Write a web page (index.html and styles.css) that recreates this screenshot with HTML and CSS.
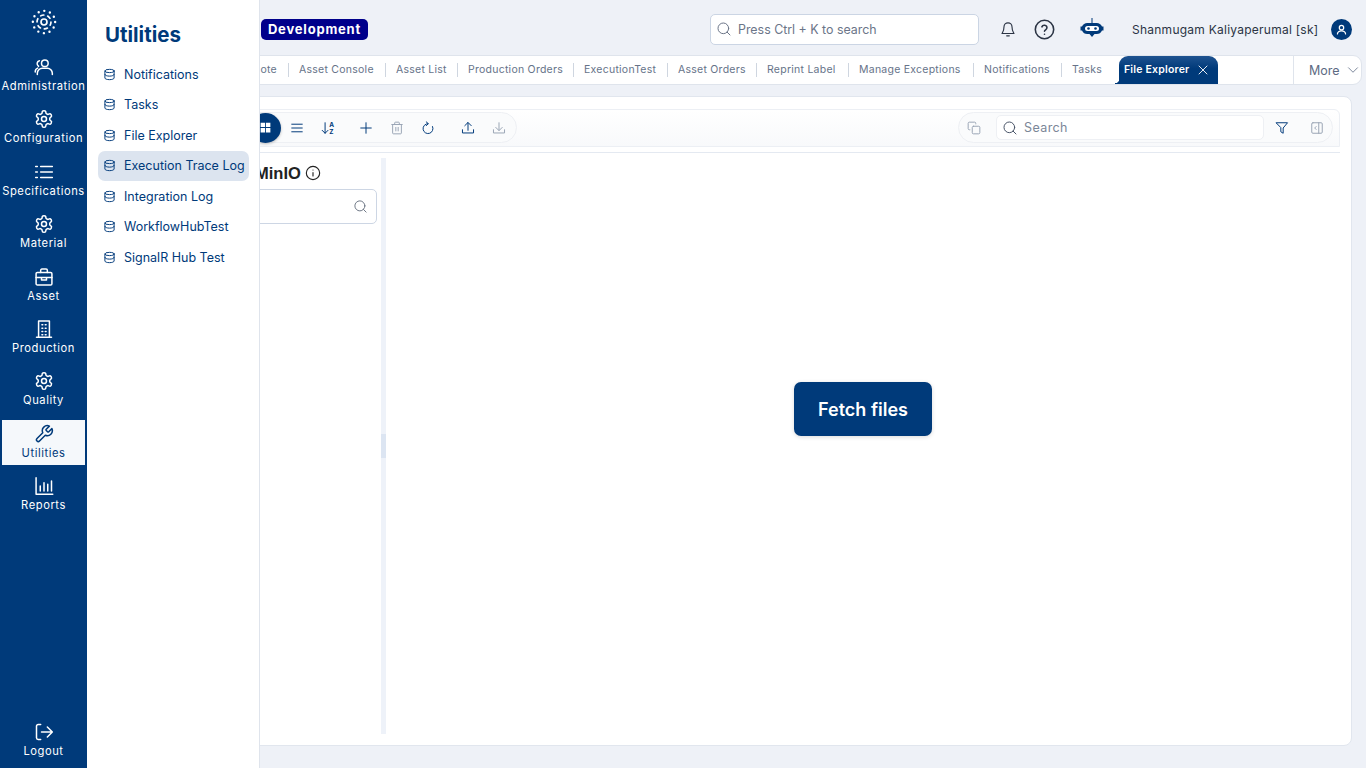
FILE: index.html
```html
<!DOCTYPE html>
<html>
<head>
  <meta charset="utf-8">
  <meta name="viewport" content="width=device-width">
  <title>File Explorer</title>
  <link rel="stylesheet" href="styles.css">
</head>
<body>
<svg class="sprite" xmlns="http://www.w3.org/2000/svg">
  <symbol id="i-users" viewBox="0 0 24 24"><circle cx="13" cy="7.5" r="4"/><path d="M4 21v-1.5a6 6 0 0 1 6-6h6a6 6 0 0 1 6 6V21"/><path d="M6.500 4.500a3.600 3.600 0 0 0-1 6.600"/><path d="M1.500 18v-.5a4.500 4.500 0 0 1 3-4.200"/></symbol>
  <symbol id="i-gear" viewBox="0 0 24 24"><path d="M12.22 2h-.44a2 2 0 0 0-2 2v.18a2 2 0 0 1-1 1.73l-.43.25a2 2 0 0 1-2 0l-.15-.08a2 2 0 0 0-2.73.73l-.22.38a2 2 0 0 0 .73 2.73l.15.1a2 2 0 0 1 1 1.72v.51a2 2 0 0 1-1 1.74l-.15.09a2 2 0 0 0-.73 2.73l.22.38a2 2 0 0 0 2.73.73l.15-.08a2 2 0 0 1 2 0l.43.25a2 2 0 0 1 1 1.73V20a2 2 0 0 0 2 2h.44a2 2 0 0 0 2-2v-.18a2 2 0 0 1 1-1.73l.43-.25a2 2 0 0 1 2 0l.15.08a2 2 0 0 0 2.73-.73l.22-.39a2 2 0 0 0-.73-2.73l-.15-.08a2 2 0 0 1-1-1.74v-.5a2 2 0 0 1 1-1.74l.15-.09a2 2 0 0 0 .73-2.73l-.22-.38a2 2 0 0 0-2.73-.73l-.15.08a2 2 0 0 1-2 0l-.43-.25a2 2 0 0 1-1-1.73V4a2 2 0 0 0-2-2z"/><circle cx="12" cy="12" r="3"/></symbol>
  <symbol id="i-list" viewBox="0 0 24 24"><path d="M8 5.500h14M8 12h14M8 18.500h14M2 5.500h2M2 12h2M2 18.500h2"/></symbol>
  <symbol id="i-case" viewBox="0 0 24 24"><rect x="2.500" y="6.500" width="19" height="15" rx="1.500"/><path d="M8 6.500V4a1.500 1.500 0 0 1 1.500-1.500h5A1.500 1.500 0 0 1 16 4v2.500"/><path d="M2.500 12.500h19M9 12.500v3h6v-3"/></symbol>
  <symbol id="i-building" viewBox="0 0 24 24"><path d="M5.500 22V2.500h13V22M3 22h18"/><path d="M9.500 7h1M13.500 7h1M9.500 11h1M13.500 11h1M9.500 15h1M13.500 15h1M9.500 19h1M13.500 19h1"/></symbol>
  <symbol id="i-wrench" viewBox="0 0 24 24"><path d="M14.700 6.300a1 1 0 0 0 0 1.400l1.600 1.600a1 1 0 0 0 1.400 0l3.770-3.770a6 6 0 0 1-7.940 7.940l-6.910 6.910a2.120 2.120 0 0 1-3-3l6.910-6.910a6 6 0 0 1 7.940-7.940l-3.760 3.760z"/></symbol>
  <symbol id="i-chart" viewBox="0 0 24 24"><path d="M2.500 2v20h20M7.500 18v-6M12 18V8M16.500 18v-8M21 18V6"/></symbol>
  <symbol id="i-logout" viewBox="0 0 24 24"><path d="M8 3H5a2 2 0 0 0-2 2v14a2 2 0 0 0 2 2h3"/><path d="M9 12h13M16 6l6 6-6 6"/></symbol>
  <symbol id="i-db" viewBox="0 0 24 24"><ellipse cx="12" cy="5.500" rx="8.500" ry="3"/><path d="M3.500 5.500v13c0 1.700 3.800 3 8.500 3s8.500-1.300 8.500-3v-13"/><path d="M3.500 12c0 1.700 3.800 3 8.500 3s8.500-1.300 8.500-3"/></symbol>
  <symbol id="i-search" viewBox="0 0 24 24"><circle cx="11" cy="11" r="8"/><path d="M21 21l-4.300-4.300"/></symbol>
  <symbol id="i-bell" viewBox="0 0 24 24"><path d="M6 8a6 6 0 0 1 12 0c0 7 2.500 8.500 3 10H3c.5-1.500 3-3 3-10z"/><path d="M10 21.500h4"/></symbol>
  <symbol id="i-help" viewBox="0 0 24 24"><circle cx="12" cy="12" r="10.500"/><path d="M9 9a3 3 0 0 1 5.800 1c0 2-2.800 2.500-2.800 4"/><path d="M12 17.500h.01"/></symbol>
  <symbol id="i-avatar" viewBox="0 0 24 24"><circle cx="12" cy="9" r="3.500"/><path d="M5.500 19a6.500 5 0 0 1 13 0"/></symbol>
  <symbol id="i-grid" viewBox="0 0 24 24"><path d="M3 3h8.200v8.200H3zM12.800 3H21v8.200h-8.200zM3 12.800h8.200V21H3zM12.800 12.800H21V21h-8.200z"/></symbol>
  <symbol id="i-menu" viewBox="0 0 24 24"><path d="M3 5.500h18M3 12h18M3 18.500h18"/></symbol>
  <symbol id="i-plus" viewBox="0 0 24 24"><path d="M12 3v18M3 12h18"/></symbol>
  <symbol id="i-trash" viewBox="0 0 24 24"><path d="M3 6h18M8 6V3.500A1.500 1.500 0 0 1 9.500 2h5A1.500 1.500 0 0 1 16 3.500V6"/><path d="M4.500 6v14.500A1.500 1.500 0 0 0 6 22h12a1.500 1.500 0 0 0 1.500-1.500V6"/><path d="M10 11v6M14 11v6"/></symbol>
  <symbol id="i-refresh" viewBox="0 0 24 24"><path d="M12 4.500a8.500 8.500 0 1 0 7.800 5"/><path d="M9 1.500l3.500 3L9 8"/></symbol>
  <symbol id="i-upload" viewBox="0 0 24 24"><path d="M12 16V3M6.500 8L12 2.500 17.500 8"/><path d="M2.500 15v5.500h19V15"/></symbol>
  <symbol id="i-download" viewBox="0 0 24 24"><path d="M12 3v13M6.500 11l5.500 5.500 5.500-5.500"/><path d="M2.500 15v5.500h19V15"/></symbol>
  <symbol id="i-copy" viewBox="0 0 24 24"><rect x="9" y="9" width="13" height="13" rx="2"/><path d="M5 15H4a2 2 0 0 1-2-2V4a2 2 0 0 1 2-2h9a2 2 0 0 1 2 2v1"/></symbol>
  <symbol id="i-filter" viewBox="0 0 24 24"><path d="M2.500 3h19l-7.500 9v9l-4-2.500V12z"/></symbol>
  <symbol id="i-panel" viewBox="0 0 24 24"><rect x="3" y="3" width="18" height="18" rx="2"/><path d="M15 3v18M10.500 9.500L8 12l2.500 2.500"/></symbol>
  <symbol id="i-info" viewBox="0 0 24 24"><circle cx="12" cy="12" r="10"/><path d="M12 16.500v-5M12 7.500h.01"/></symbol>
  <symbol id="i-x" viewBox="0 0 24 24"><path d="M4 4l16 16M20 4L4 20"/></symbol>
  <symbol id="i-down" viewBox="0 0 24 24"><path d="M3 7.500l9 9 9-9"/></symbol>
</svg>

<div class="app">
  <nav class="rail">
    <svg class="logo" viewBox="0 0 28 28">
      <circle class="logoDots" cx="14" cy="14" r="12"/>
      <circle class="logoDotsInner" cx="14" cy="14" r="7.500"/>
      <circle class="logoRing" cx="14" cy="14" r="3.200"/>
    </svg>
    <div class="railItems">
      <a class="railItem"><svg class="icon"><use href="#i-users"/></svg>Administration</a>
      <a class="railItem"><svg class="icon"><use href="#i-gear"/></svg>Configuration</a>
      <a class="railItem"><svg class="icon"><use href="#i-list"/></svg>Specifications</a>
      <a class="railItem"><svg class="icon"><use href="#i-gear"/></svg>Material</a>
      <a class="railItem"><svg class="icon"><use href="#i-case"/></svg>Asset</a>
      <a class="railItem"><svg class="icon"><use href="#i-building"/></svg>Production</a>
      <a class="railItem"><svg class="icon"><use href="#i-gear"/></svg>Quality</a>
      <a class="railItem active"><svg class="icon"><use href="#i-wrench"/></svg>Utilities</a>
      <a class="railItem"><svg class="icon"><use href="#i-chart"/></svg>Reports</a>
    </div>
    <a class="railItem"><svg class="icon"><use href="#i-logout"/></svg>Logout</a>
  </nav>

  <aside class="flyout">
    <h2>Utilities</h2>
    <ul>
      <li><svg class="icon"><use href="#i-db"/></svg>Notifications</li>
      <li><svg class="icon"><use href="#i-db"/></svg>Tasks</li>
      <li><svg class="icon"><use href="#i-db"/></svg>File Explorer</li>
      <li class="current"><svg class="icon"><use href="#i-db"/></svg>Execution Trace Log</li>
      <li><svg class="icon"><use href="#i-db"/></svg>Integration Log</li>
      <li><svg class="icon"><use href="#i-db"/></svg>WorkflowHubTest</li>
      <li><svg class="icon"><use href="#i-db"/></svg>SignalR Hub Test</li>
    </ul>
  </aside>

  <main class="main">
    <header class="topbar">
      <span class="envBadge">Development</span>
      <div class="globalSearch"><svg class="icon"><use href="#i-search"/></svg><span>Press Ctrl + K to search</span></div>
      <svg class="icon bell"><use href="#i-bell"/></svg>
      <svg class="icon help"><use href="#i-help"/></svg>
      <svg class="bot" viewBox="0 0 24 24">
        <path class="botBody" d="M11.500 0h1v5h-1zM8 5h8a6 6 0 0 1 6 3.500h1.500v4H22a6 6 0 0 1-6 3.500h-1.500L12 19l-2.500-3H8a6 6 0 0 1-6-3.500H.5v-4H2A6 6 0 0 1 8 5z"/>
        <rect class="botFace" x="5" y="8" width="14" height="5" rx="2.500"/>
        <circle class="botEye" cx="8.500" cy="10.500" r="1.300"/>
        <circle class="botEye" cx="15.500" cy="10.500" r="1.300"/>
      </svg>
      <span class="userName">Shanmugam Kaliyaperumal [sk]</span>
      <span class="avatar"><svg class="icon"><use href="#i-avatar"/></svg></span>
    </header>

    <div class="tabBar">
      <div class="tabs">
        <a class="tab">Note</a>
        <a class="tab">Asset Console</a>
        <a class="tab">Asset List</a>
        <a class="tab">Production Orders</a>
        <a class="tab">ExecutionTest</a>
        <a class="tab">Asset Orders</a>
        <a class="tab">Reprint Label</a>
        <a class="tab">Manage Exceptions</a>
        <a class="tab">Notifications</a>
        <a class="tab">Tasks</a>
        <a class="tab open">File Explorer<svg class="icon"><use href="#i-x"/></svg></a>
      </div>
      <div class="more">More<svg class="icon"><use href="#i-down"/></svg></div>
    </div>

    <section class="card">
      <div class="toolbar">
        <div class="pill leftPill">
          <div class="toolGroup">
            <span class="tool selected"><svg class="icon solid"><use href="#i-grid"/></svg></span>
            <span class="tool"><svg class="icon"><use href="#i-menu"/></svg></span>
            <span class="tool sortTool"><svg viewBox="0 0 24 24" class="icon"><path d="M7 3v18M2 16l5 5 5-5"/><text x="14" y="10.500">A</text><text x="14" y="21.500">Z</text></svg></span>
          </div>
          <div class="toolGroup">
            <span class="tool"><svg class="icon"><use href="#i-plus"/></svg></span>
            <span class="tool off"><svg class="icon"><use href="#i-trash"/></svg></span>
            <span class="tool"><svg class="icon"><use href="#i-refresh"/></svg></span>
          </div>
          <div class="toolGroup lastGroup">
            <span class="tool"><svg class="icon"><use href="#i-upload"/></svg></span>
            <span class="tool off"><svg class="icon"><use href="#i-download"/></svg></span>
          </div>
        </div>
        <div class="pill rightPill">
          <span class="tool off copyTool"><svg class="icon"><use href="#i-copy"/></svg></span>
          <div class="gridSearch"><svg class="icon"><use href="#i-search"/></svg><span>Search</span></div>
          <span class="tool"><svg class="icon"><use href="#i-filter"/></svg></span>
          <span class="tool off panelTool"><svg class="icon"><use href="#i-panel"/></svg></span>
        </div>
      </div>

      <div class="cardBody">
        <div class="treePane">
          <div class="treeTitle"><span>MinIO</span><svg class="icon"><use href="#i-info"/></svg></div>
          <div class="treeSearch"><svg class="icon"><use href="#i-search"/></svg></div>
        </div>
        <div class="splitter"><span></span></div>
        <div class="filePane">
          <button class="fetchBtn">Fetch files</button>
        </div>
      </div>
    </section>
  </main>
</div>
</body>
</html>
```

FILE: styles.css
```css
* {
  box-sizing: border-box;
}

html, body {
  height: 100%;
}

body {
  margin: 0;
  overflow: hidden;
  background-color: #eef1f7;
  color: #003a7a;
  font-family: "Inter", "Noto Sans", sans-serif;
}

.sprite {
  display: none;
}

.icon {
  display: block;
  flex: none;
  fill: none;
  stroke: currentColor;
  stroke-width: 2;
  stroke-linecap: round;
  stroke-linejoin: round;
}

.app {
  display: flex;
  height: 768px;
}

/* left rail */
.rail {
  flex: none;
  width: 87px;
  display: flex;
  flex-direction: column;
  align-items: center;
  background-color: #003a7a;
  color: #fff;
  padding-bottom: 5px;
}

.logo {
  flex: none;
  width: 26px;
  height: 26px;
  margin-top: 9px;
  margin-bottom: 18px;
}

.logoDots,
.logoDotsInner,
.logoRing {
  fill: none;
  stroke: #fff;
  stroke-linecap: round;
}

.logoDots {
  stroke-width: 2.6;
  stroke-dasharray: 0 6.28;
}

.logoDotsInner {
  stroke-width: 1.8;
  stroke-dasharray: 3.5 4.35;
}

.logoRing {
  stroke-width: 1.8;
}

.railItems {
  flex: 1;
  display: flex;
  flex-direction: column;
  gap: 7.4px;
  width: 100%;
  align-items: center;
}

.railItem {
  width: 83px;
  height: 45px;
  display: flex;
  flex-direction: column;
  align-items: center;
  padding-top: 4px;
  font-size: 11.2px;
  line-height: 16px;
  letter-spacing: .55px;
  white-space: nowrap;
}

.railItem .icon {
  width: 20px;
  height: 20px;
  stroke-width: 1.8;
  margin-bottom: 1px;
}

.railItem.active {
  background-color: #f5f8fb;
  color: #003a7a;
}

/* utilities menu, opened over the page */
.flyout {
  position: absolute;
  top: 0;
  bottom: 0;
  left: 87px;
  width: 173px;
  z-index: 5;
  padding: 0 10px 0 11px;
  background-color: #fff;
  border-right: 1px solid #dfe4ec;
}

.flyout h2 {
  margin: 22px 0 11px 7px;
  font-size: 20.5px;
  line-height: 26px;
  font-weight: 700;
}

.flyout ul {
  list-style-type: none;
  margin: 0;
  padding: 0;
  display: flex;
  flex-direction: column;
  gap: .6px;
}

.flyout li {
  height: 30px;
  display: flex;
  align-items: center;
  gap: 8px;
  padding-left: 5px;
  border-radius: 7px;
  font-size: 12.5px;
  white-space: nowrap;
}

.flyout li .icon {
  width: 13px;
  height: 13px;
  stroke-width: 1.8;
}

.flyout li.current {
  background-color: #dce4ef;
}

/* top row */
.main {
  flex: 1;
  min-width: 0;
  display: flex;
  flex-direction: column;
  padding: 0 14px 22px 13px;
}

.topbar {
  flex: none;
  height: 55px;
  display: flex;
  align-items: center;
  padding-left: 161px;
  padding-top: 3px;
  margin-right: -14px;
}

.envBadge {
  flex: none;
  width: 107px;
  height: 21px;
  border-radius: 5px;
  background-color: #00008b;
  color: #fff;
  font-size: 13px;
  line-height: 20px;
  font-weight: 700;
  letter-spacing: .8px;
  text-align: center;
}

.globalSearch {
  flex: none;
  width: 269px;
  height: 31px;
  margin-left: 342px;
  display: flex;
  align-items: center;
  gap: 6px;
  padding-left: 5px;
  background-color: #fff;
  border: 1px solid #cbd5e4;
  border-radius: 5px;
  color: #6b7588;
  font-size: 12.4px;
}

.globalSearch .icon {
  width: 16px;
  height: 16px;
  stroke-width: 1.5;
}

.bell {
  width: 16px;
  height: 17px;
  margin-left: 21px;
  stroke-width: 1.7;
  color: #2b3444;
}

.help {
  width: 21px;
  height: 21px;
  margin-left: 18px;
  stroke-width: 1.8;
  color: #2b3444;
}

.bot {
  flex: none;
  width: 24px;
  height: 24px;
  margin-left: 25px;
  margin-top: 2px;
}

.botBody {
  fill: #003a7a;
}

.botFace {
  fill: #fff;
}

.botEye {
  fill: #003a7a;
}

.userName {
  flex: none;
  width: 185px;
  margin-left: 28px;
  font-size: 12px;
  letter-spacing: .25px;
  color: #2b3444;
  white-space: nowrap;
}

.avatar {
  flex: none;
  width: 21px;
  height: 21px;
  margin-left: 14px;
  display: flex;
  align-items: center;
  justify-content: center;
  border-radius: 50%;
  background-color: #003a7a;
  color: #fff;
}

.avatar .icon {
  width: 15px;
  height: 15px;
}

/* tabs */
.tabBar {
  flex: none;
  height: 30px;
  margin-right: -10px;
  display: flex;
  background-color: #fff;
  border: 1px solid #dfe4ec;
  border-radius: 0 9px 9px 0;
}

.tabs {
  flex: 1;
  display: grid;
  grid-template-columns: 187px 97px 72px 116px 94px 89px 92px 125px 88px 54px 103px;
  align-items: center;
}

.tab {
  display: flex;
  align-items: center;
  height: 14px;
  padding-left: 10px;
  padding-bottom: 1px;
  border-left: 1px solid #cfd6e0;
  color: #667389;
  font-size: 10.5px;
  letter-spacing: .25px;
  white-space: nowrap;
}

.tab:first-child {
  justify-content: flex-end;
  padding-right: 11px;
  border-left: 0;
}

.tab.open {
  position: relative;
  height: 28px;
  margin-left: 4px;
  padding-left: 5px;
  gap: 8px;
  border-left: 0;
  border-radius: 9px 9px 0 0;
  background: linear-gradient(#1f5390, #003a7a 45%);
  color: #fff;
  font-weight: 600;
  letter-spacing: .2px;
}

.tab.open::before {
  content: "";
  position: absolute;
  left: -4px;
  bottom: 0;
  width: 4px;
  height: 5px;
  background: radial-gradient(circle at 0 0, transparent 4px, #003a7a 4.5px);
}

.tab.open .icon {
  width: 12px;
  height: 12px;
  stroke-width: 1.8;
}

.more {
  flex: none;
  width: 68px;
  display: flex;
  align-items: center;
  gap: 7px;
  padding-left: 15px;
  border-left: 1px solid #dfe4ec;
  color: #5d6b83;
  font-size: 12.5px;
}

.more .icon {
  width: 12px;
  height: 12px;
  stroke-width: 1.6;
}

/* card */
.card {
  flex: 1;
  min-height: 0;
  margin-top: 11px;
  display: flex;
  flex-direction: column;
  padding: 12px 11px 11px;
  background-color: #fff;
  border: 1px solid #e1e6ee;
  border-radius: 8px;
}

.toolbar {
  flex: none;
  height: 38px;
  display: flex;
  justify-content: space-between;
  padding: 2px 6px 3px 0;
  background: linear-gradient(#fff, #f8f9fb);
  border: 1px solid #eceff4;
  border-radius: 6px 6px 0 0;
}

.pill {
  height: 31px;
  display: flex;
  align-items: center;
  background-color: #fafbfc;
  border: 1px solid #eef0f4;
  border-radius: 16px;
}

.leftPill {
  gap: 7px;
  padding-left: 136px;
  padding-right: 2px;
}

.rightPill {
  width: 375px;
  padding-left: 1px;
}

.toolGroup {
  display: flex;
}

.lastGroup {
  margin-left: 2px;
}

.tool {
  flex: none;
  width: 31px;
  height: 30px;
  display: flex;
  align-items: center;
  justify-content: center;
  color: #003a7a;
}

.tool .icon {
  width: 14px;
  height: 14px;
  stroke-width: 1.7;
}

.tool.off {
  color: #9aa5b5;
}

.tool.selected {
  border-radius: 50%;
  background-color: #003a7a;
  color: #fff;
  box-shadow: 0 1px 3px rgba(0,0,0,.25);
}

.tool .solid {
  width: 13px;
  height: 13px;
  fill: currentColor;
  stroke: none;
}

.sortTool text {
  font-size: 11px;
  font-weight: 700;
  fill: currentColor;
  stroke: none;
  font-family: "Inter", sans-serif;
}

.copyTool {
  margin-left: -2px;
}

.panelTool {
  margin-left: 4px;
}

.gridSearch {
  flex: none;
  width: 268px;
  height: 25px;
  margin-left: 7px;
  margin-right: 2px;
  display: flex;
  align-items: center;
  gap: 6px;
  padding-left: 5px;
  background-color: #fff;
  border: 1px solid #eef0f4;
  border-radius: 5px;
  color: #7b8698;
  font-size: 12.5px;
  letter-spacing: .4px;
}

.gridSearch .icon {
  width: 16px;
  height: 16px;
  stroke-width: 1.5;
  color: #4a5568;
}

.cardBody {
  flex: 1;
  min-height: 0;
  display: flex;
  margin-top: 5px;
  padding-top: 5px;
  border-top: 1px solid #e4e9f1;
}

.treePane {
  flex: none;
  width: 269px;
  padding-right: 4px;
}

.treeTitle {
  height: 30px;
  display: flex;
  align-items: center;
  gap: 4px;
  padding-left: 143px;
  color: #222;
  font-family: "Liberation Sans", sans-serif;
  font-size: 16.5px;
  font-weight: 700;
}

.treeTitle .icon {
  width: 16px;
  height: 16px;
  stroke-width: 1.7;
}

.treeSearch {
  height: 35px;
  margin-top: 1px;
  display: flex;
  align-items: center;
  justify-content: flex-end;
  padding-right: 8px;
  border: 1px solid #cdd6e4;
  border-radius: 5px;
  color: #66707f;
}

.treeSearch .icon {
  width: 15px;
  height: 15px;
  stroke-width: 1.5;
}

.splitter {
  flex: none;
  width: 5px;
  display: flex;
  align-items: center;
  background-color: #eef2f9;
}

.splitter span {
  width: 100%;
  height: 24px;
  background-color: #dce5f2;
}

.filePane {
  flex: 1;
  display: flex;
  align-items: center;
  justify-content: center;
}

.fetchBtn {
  width: 138px;
  height: 54px;
  margin-bottom: 74px;
  border: 0;
  border-radius: 7px;
  background-color: #003a7a;
  color: #fff;
  font-family: "Inter", sans-serif;
  font-size: 18px;
  font-weight: 600;
  box-shadow: 0 1px 4px rgba(0,0,0,.15);
}
```
